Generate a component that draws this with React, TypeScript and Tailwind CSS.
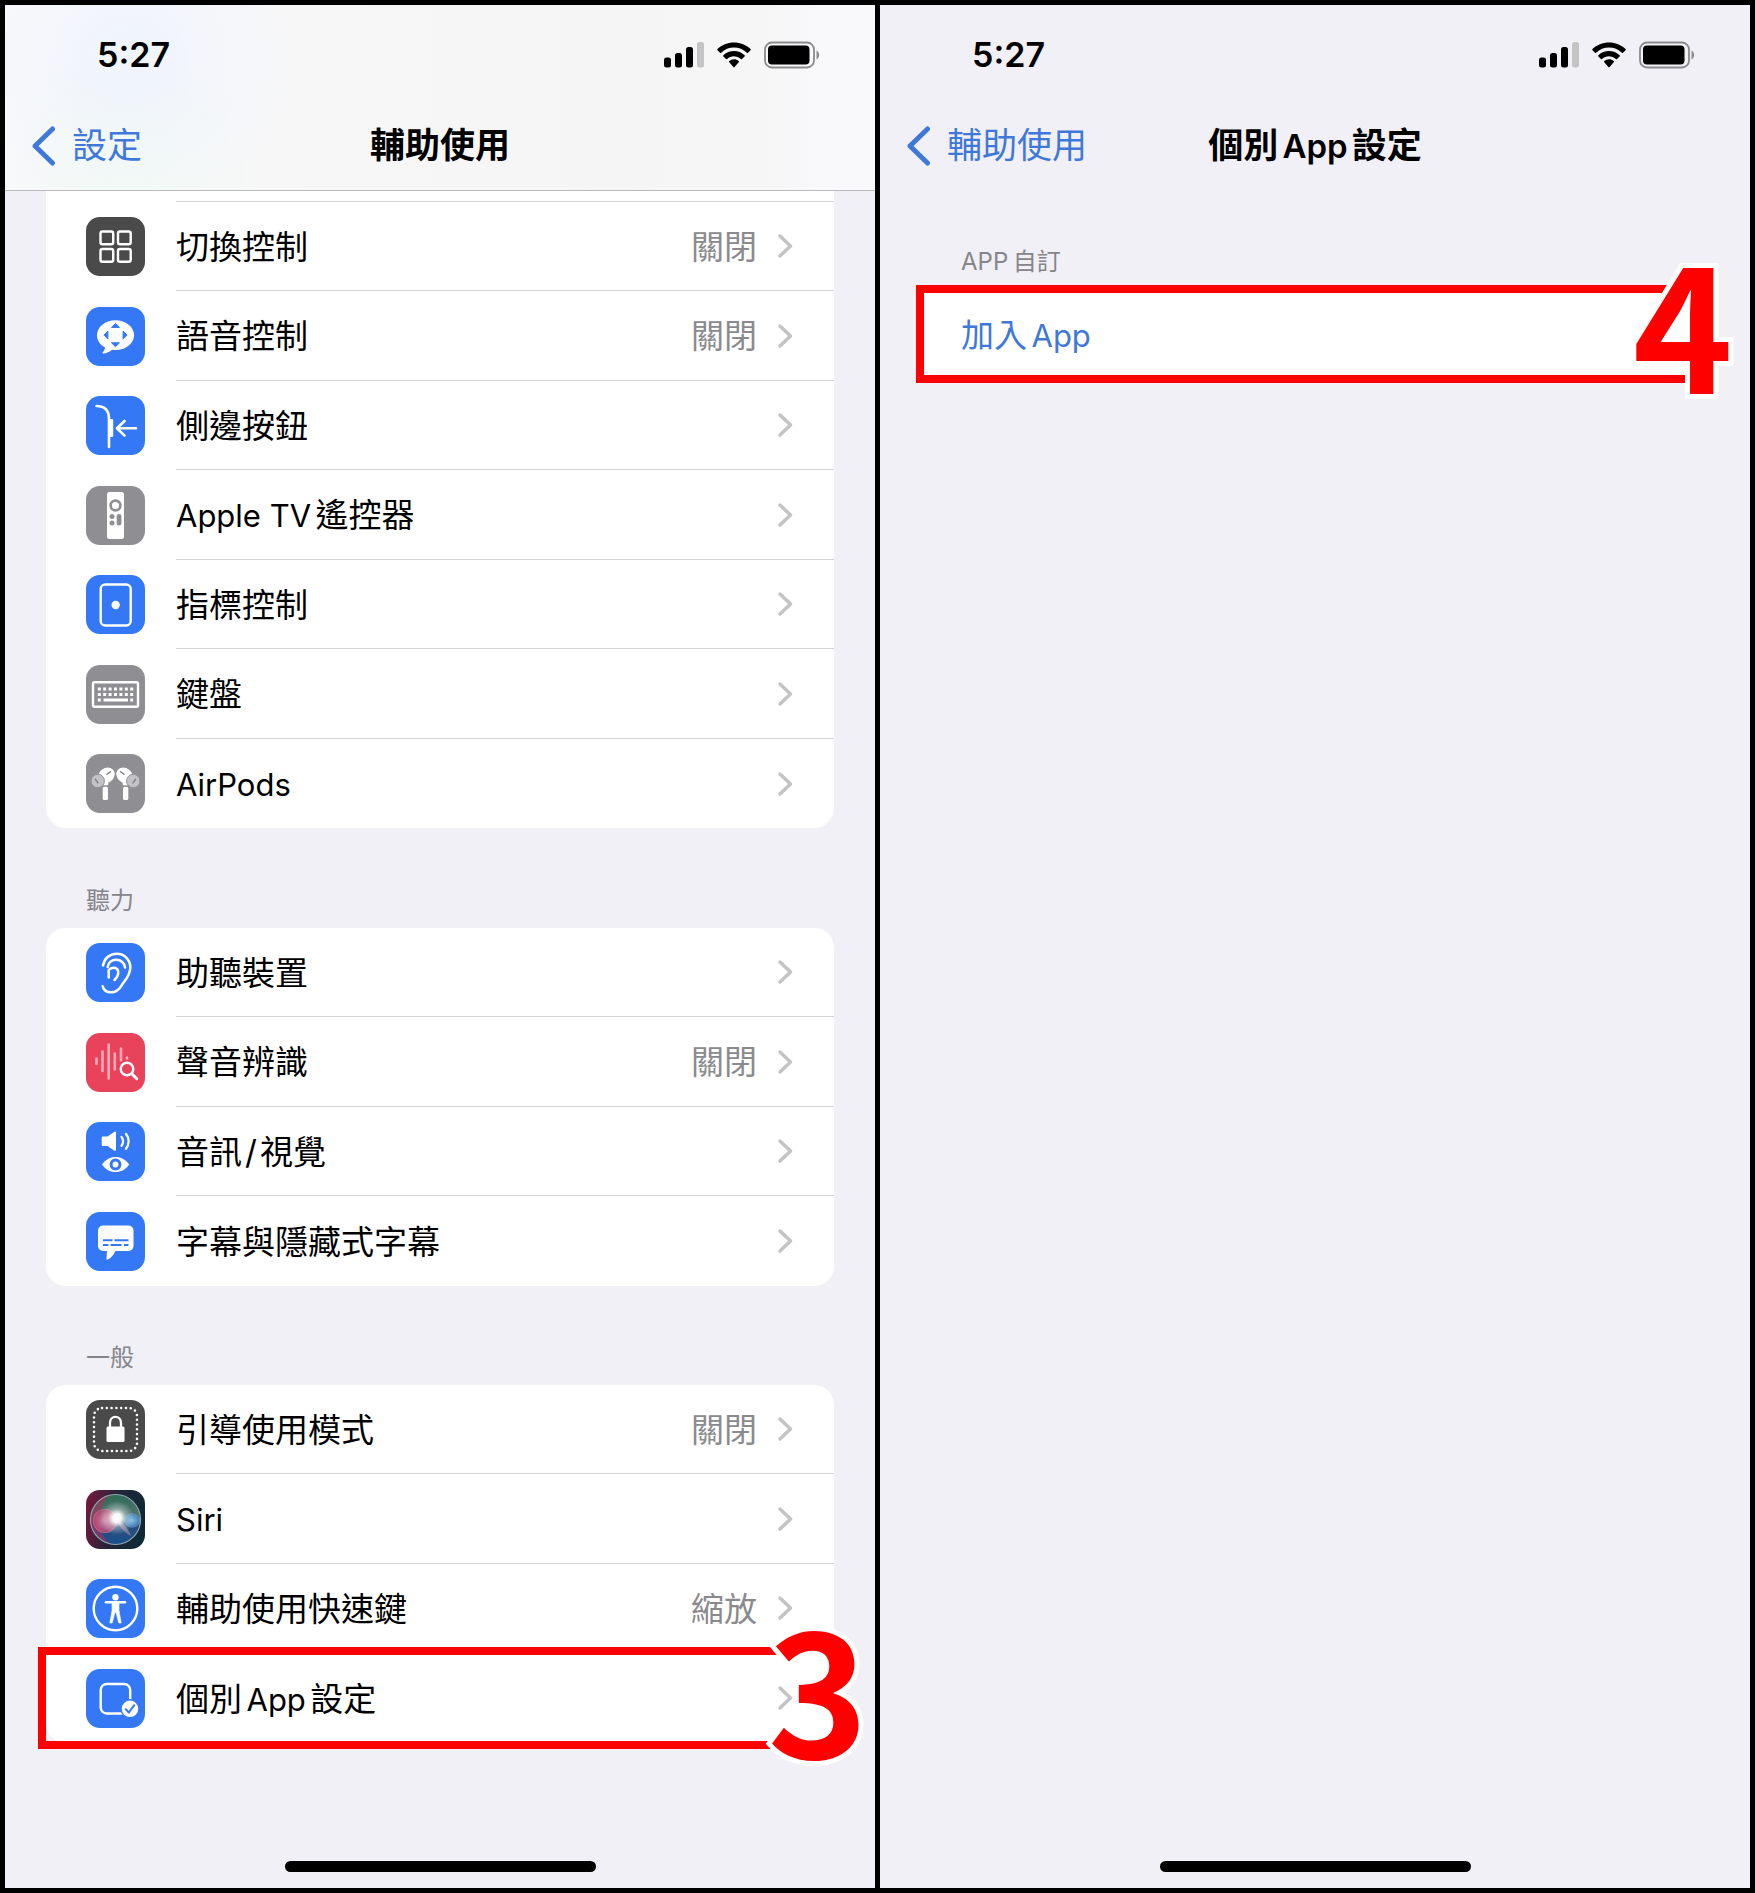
import type { ReactNode } from "react";

const BLUE = "#3478f6";
const GRAY = "#8e8e93";
const DARK = "#4a4a4a";

/* Sets the Latin runs of a Chinese string in a slightly smaller face, with thin spaces around them. */
function Mixed({ text, latin }: { text: string; latin: string }) {
  return (
    <span className="whitespace-pre">
      {text.split(/([\x20-\x7e]+)/).map((part, i) => {
        if (i % 2 === 0) return part;
        if (part === "/") return <span key={i} className="mx-[3px]">/</span>;
        return (
          <span key={i}>
            {part.startsWith(" ") && <span className="text-[16px]"> </span>}
            <span className={latin}>{part.trim()}</span>
            {part.endsWith(" ") && <span className="text-[16px]"> </span>}
          </span>
        );
      })}
    </span>
  );
}

function StatusBar() {
  return (
    <div className="flex h-[100px] items-center justify-between pl-[92px] pr-[55px]">
      <time className="text-[34px] leading-none font-semibold">5:27</time>
      <div className="flex items-center gap-[13px]">
        <svg width="40" height="26" viewBox="0 0 40 26" aria-label="訊號">
          <rect x="0" y="15.500" width="7" height="10" rx="2.500" />
          <rect x="11" y="11" width="7" height="14.500" rx="2.500" />
          <rect x="22" y="5" width="7" height="20.500" rx="2.500" />
          <rect x="33" y="0" width="7" height="25.500" rx="2.500" fill="#c4c4c6" />
        </svg>
        <svg width="34" height="26" viewBox="0 0 34 26" aria-label="Wi-Fi">
          <path d="M17 0.500C23.400 0.500 29.200 3 33.500 7a.8.8 0 0 1 0 1.200L31 10.700a.8.8 0 0 1-1.100 0A18.500 18.500 0 0 0 17 5.500 18.500 18.500 0 0 0 4.100 10.700a.8.8 0 0 1-1.100 0L.5 8.200A.8.8 0 0 1 .5 7C4.800 3 10.600.5 17 .5Z" />
          <path d="M17 9c4.100 0 7.800 1.600 10.600 4.200a.8.8 0 0 1 0 1.200L25 17a.8.8 0 0 1-1.100 0A10.300 10.300 0 0 0 17 14.200c-2.600 0-5 1-6.900 2.800a.8.8 0 0 1-1.100 0l-2.600-2.600a.8.8 0 0 1 0-1.200A15.500 15.500 0 0 1 17 9Z" />
          <path d="M17 17.300c1.800 0 3.400.6 4.700 1.700a.8.8 0 0 1 0 1.200l-4.100 4.900a.8.8 0 0 1-1.200 0l-4.100-4.900a.8.8 0 0 1 0-1.200A7.200 7.200 0 0 1 17 17.300Z" />
        </svg>
        <svg width="56" height="28" viewBox="0 0 56 28" aria-label="電池">
          <rect x="1" y="1.500" width="49" height="25" rx="7" fill="none" stroke="#8b8b8d" strokeWidth="1.800" />
          <rect x="4" y="4.500" width="41.500" height="19" rx="4" />
          <path d="M52.500 9.500c1.600.7 2.600 2.400 2.600 4.500s-1 3.800-2.600 4.500Z" fill="#8b8b8d" />
        </svg>
      </div>
    </div>
  );
}

function NavBar({ back, title }: { back: string; title: string }) {
  return (
    <div className="grid h-[85px] grid-cols-[1fr_auto_1fr] items-center pb-[4px] text-[35px] leading-none">
      <button type="button" className="flex items-center gap-[16px] pl-[26px] text-[#3f78d8]">
        <svg width="25" height="40" viewBox="0 0 25 40" fill="none" stroke="#3f78d8" strokeWidth="5" strokeLinecap="round" strokeLinejoin="round" aria-hidden="true">
          <path d="M21.500 3 4 20l17.500 17" />
        </svg>
        <span>{back}</span>
      </button>
      <h1 className="font-semibold">
        <Mixed text={title} latin="text-[33px]" />
      </h1>
    </div>
  );
}

function Tile({ color, children }: { color: string; children: ReactNode }) {
  return (
    <svg className="size-[59px] shrink-0" viewBox="0 0 59 59" fill="none" aria-hidden="true">
      <rect width="59" height="59" rx="14" fill={color} />
      {children}
    </svg>
  );
}

const switchIcon = (
  <Tile color={DARK}>
    <g stroke="#fff" strokeWidth="2.400">
      <rect x="14.500" y="14.500" width="12.700" height="12.700" rx="2" />
      <rect x="32" y="14.500" width="12.700" height="12.700" rx="2" />
      <rect x="14.500" y="32" width="12.700" height="12.700" rx="2" />
      <rect x="32" y="32" width="12.700" height="12.700" rx="2" />
    </g>
  </Tile>
);

const voiceIcon = (
  <Tile color={BLUE}>
    <path d="M29.500 13.200c10.300 0 18.600 6.700 18.600 15 0 8.200-8.300 14.800-18.600 14.800-1.200 0-2.300-.1-3.400-.3-2.500 2.200-5.600 3.500-8.900 3.800-.7 0-.9-.7-.5-1.200 1.400-1.300 2.200-2.900 2.400-4.700C14.200 37.900 11 33.400 11 28.200c0-8.300 8.200-15 18.500-15Z" fill="#fff" />
    <g fill={BLUE} stroke={BLUE} strokeLinejoin="round">
      <path d="m29.500 16.500 4 3.900h-8Z" />
      <path d="m29.500 39.700 4-3.900h-8Z" />
      <path d="m18 28.100 3.900-4v8Z" />
      <path d="m41 28.100-3.900-4v8Z" />
    </g>
  </Tile>
);

const sideIcon = (
  <Tile color={BLUE}>
    <g stroke="#fff" strokeLinecap="round" strokeLinejoin="round">
      <path d="M10.500 10c8 0 12.500 4.500 12.500 13v28" strokeWidth="2.600" />
      <path d="M50 32.300H32M38.500 25l-7.500 7.300 7.500 7.300" strokeWidth="2.600" />
    </g>
    <rect x="22.500" y="23" width="4.700" height="18" rx="1" fill="#fff" />
  </Tile>
);

const remoteIcon = (
  <Tile color={GRAY}>
    <rect x="21" y="6" width="17" height="47" rx="2.500" fill="#fff" />
    <circle cx="29.500" cy="19.500" r="4.900" stroke={GRAY} strokeWidth="2.600" />
    <g fill={GRAY}>
      <circle cx="26" cy="30.500" r="2.500" />
      <circle cx="26" cy="37" r="2.500" />
      <rect x="30.700" y="28" width="4.700" height="11.500" rx="2.300" />
    </g>
  </Tile>
);

const pointerIcon = (
  <Tile color={BLUE}>
    <rect x="14.700" y="9.500" width="30" height="41" rx="4.500" stroke="#fff" strokeWidth="2.400" />
    <circle cx="29.700" cy="30" r="4.200" fill="#fff" />
  </Tile>
);

const keyboardIcon = (
  <Tile color={GRAY}>
    <rect x="7" y="17.200" width="45" height="24.500" rx="1.500" stroke="#fff" strokeWidth="2.400" />
    <g stroke="#fff" strokeWidth="3">
      <path d="M11.800 24h36M11.800 29.500h36" strokeDasharray="3 2.400" />
      <path d="M11.800 35h3M17.500 35h24.500M44.200 35h3" />
    </g>
  </Tile>
);

const airpod = (
  <>
    <ellipse cx="20.300" cy="21.500" rx="9" ry="7.300" fill="#fff" transform="rotate(-38 20.300 21.500)" />
    <rect x="16.700" y="32.700" width="5.300" height="13.300" rx="1.500" fill="#fff" />
    <path d="M17 29h5.500l-.5 2.200h-5Z" fill="#fff" />
    <circle cx="11.700" cy="27" r="6.700" fill="#c3c3c7" stroke={GRAY} strokeWidth="1" />
    <path d="m21 20.300 3.500-2.500M9.500 25.300l2.500 3.700" stroke="#77777c" strokeWidth="1.300" strokeLinecap="round" />
  </>
);

const airpodsIcon = (
  <Tile color={GRAY}>
    {airpod}
    <g transform="matrix(-1 0 0 1 59 0)">{airpod}</g>
  </Tile>
);

const earIcon = (
  <Tile color={BLUE}>
    <g stroke="#fff" strokeWidth="2.500" strokeLinecap="round" strokeLinejoin="round">
      <path d="M17 22.500c1.300-7 6.500-11.700 13.700-11.700 8 0 13.600 6 13.600 13.700 0 8.500-5.300 12.300-8.600 17.800-2.500 4.200-5.500 7-10.700 7-4.300 0-7.300-2.300-8.300-6" />
      <path d="M21.700 24c.5-4.300 4-7.200 8.500-7.200 4.800 0 8.500 3.200 8.800 7.700" />
      <path d="M22.700 34.500V27c2.500-3 8-3.200 9.300.5.800 3.200-.8 6.800-3.500 9.500" />
    </g>
  </Tile>
);

const soundIcon = (
  <Tile color="#e8435a">
    <g stroke="#f6a9b4" strokeWidth="2.600" strokeLinecap="round">
      <path d="M10.500 25.500v5.500M16.500 18.500v19.500M22.700 11.500v34M28.800 20.500v16M35 15.500v12M41 24.500v1" />
    </g>
    <circle cx="41" cy="36" r="6.300" stroke="#fff" strokeWidth="2.400" />
    <path d="m45.800 40.800 5 5" stroke="#fff" strokeWidth="3" strokeLinecap="round" />
  </Tile>
);

const audioIcon = (
  <Tile color={BLUE}>
    <path d="M17 14.500h4.500l7-4.700c.8-.5 1.500-.2 1.500.6v17.800c0 .8-.7 1.100-1.500.6l-7-4.800H17c-.8 0-1.300-.5-1.300-1.300v-6.900c0-.8.500-1.300 1.300-1.300Z" fill="#fff" />
    <path d="M35.500 14.800c2 2.800 2 6.200 0 9M40 11.800c3.500 4.500 3.500 10.500 0 15" stroke="#fff" strokeWidth="2.200" strokeLinecap="round" />
    <path d="M16 42.500c3.500-5 8-7.500 13.500-7.500S39.700 37.500 43.200 42.500c-3.500 5-8 7.500-13.700 7.500S19.500 47.500 16 42.500Z" fill="#fff" />
    <circle cx="29.500" cy="42.500" r="4.400" stroke={BLUE} strokeWidth="3" fill="#fff" />
  </Tile>
);

const captionIcon = (
  <Tile color={BLUE}>
    <path d="M17 13.500h25.500a5 5 0 0 1 5 5V34a5 5 0 0 1-5 5H29.500c-2 4.500-5 7.500-8 8.500-1 .3-1.300-.2-1-1L21 39h-4a5 5 0 0 1-5-5V18.500a5 5 0 0 1 5-5Z" fill="#fff" />
    <path d="M17 28.200h9.500M28.500 28.200h14M17 33h5.500M24.500 33h11M38 33h4.500" stroke={BLUE} strokeWidth="2" />
  </Tile>
);

const guidedIcon = (
  <Tile color={DARK}>
    <rect x="8" y="8" width="43" height="43" rx="8" stroke="#fff" strokeWidth="2.600" strokeLinecap="round" strokeDasharray="0 4.800" />
    <rect x="20.500" y="26.500" width="18" height="15.500" rx="1.500" fill="#fff" />
    <path d="M24 27v-4c0-3.500 2.300-6.200 5.500-6.200S35 19.500 35 23v4" stroke="#fff" strokeWidth="2.300" />
  </Tile>
);

const siriIcon = (
  <svg className="size-[59px] shrink-0" viewBox="0 0 59 59" aria-hidden="true">
    <defs>
      <linearGradient id="siriBase" x1="0" y1="0.300" x2="1" y2="0.500">
        <stop offset="0" stopColor="#74183c" />
        <stop offset="0.450" stopColor="#25243a" />
        <stop offset="1" stopColor="#0c2a35" />
      </linearGradient>
      <linearGradient id="siriOrb" x1="0" y1="0" x2="0" y2="1">
        <stop offset="0" stopColor="#2d6b55" />
        <stop offset="0.400" stopColor="#50756f" />
        <stop offset="0.620" stopColor="#2d4d78" />
        <stop offset="1" stopColor="#17508e" />
      </linearGradient>
      <radialGradient id="siriPink">
        <stop offset="0" stopColor="#e58aac" />
        <stop offset="0.900" stopColor="#c24a78" stopOpacity="0.900" />
        <stop offset="1" stopColor="#e07aa0" />
      </radialGradient>
      <radialGradient id="siriCyan">
        <stop offset="0" stopColor="#8fd0f5" />
        <stop offset="0.900" stopColor="#4a8ecb" stopOpacity="0.900" />
        <stop offset="1" stopColor="#6fb4e0" />
      </radialGradient>
      <radialGradient id="siriGlow">
        <stop offset="0" stopColor="#fff" />
        <stop offset="0.250" stopColor="#fff" stopOpacity="0.950" />
        <stop offset="0.550" stopColor="#fff" stopOpacity="0.350" />
        <stop offset="1" stopColor="#fff" stopOpacity="0" />
      </radialGradient>
    </defs>
    <rect width="59" height="59" rx="14" fill="url(#siriBase)" />
    <circle cx="29.500" cy="29.500" r="25" fill="url(#siriOrb)" />
    <path d="M6 21C8 12 16 5 26 4.700 18 9 14 18 14 30S18 50 26 54.200C14 53 4.500 43 4.500 30Z" fill="#a52e58" opacity="0.600" />
    <circle cx="19" cy="31" r="12" fill="url(#siriPink)" opacity="0.850" />
    <ellipse cx="46" cy="30.500" rx="8" ry="7" fill="url(#siriCyan)" opacity="0.850" />
    <path d="M30 29c7 3 12 9 15 17-6-3-12-9-15-17Z" fill="#e3b9d3" opacity="0.400" />
    <circle cx="31" cy="28" r="17" fill="url(#siriGlow)" />
    <circle cx="29.500" cy="29.500" r="25" fill="none" stroke="#8fa5aa" strokeWidth="1.200" />
  </svg>
);

const accessIcon = (
  <Tile color={BLUE}>
    <circle cx="29.500" cy="29.500" r="21.800" stroke="#fff" strokeWidth="2.400" />
    <circle cx="29.500" cy="18.300" r="3.200" fill="#fff" />
    <path d="M20 23.300h19" stroke="#fff" strokeWidth="2.600" strokeLinecap="round" />
    <path d="M26 23h7v8.500l2.200 12.500h-2.400l-2.700-10.500h-1.200L26.200 44h-2.400L26 31.500Z" fill="#fff" stroke="#fff" strokeWidth="0.600" strokeLinejoin="round" />
  </Tile>
);

const perAppIcon = (
  <Tile color={BLUE}>
    <rect x="14.700" y="15" width="29.500" height="29.500" rx="6" stroke="#fff" strokeWidth="2.400" />
    <circle cx="44" cy="39.800" r="9" fill="#fff" stroke={BLUE} strokeWidth="1.500" />
    <path d="m39.800 40.200 3.100 3.300 5.300-7.300" stroke={BLUE} strokeWidth="2" strokeLinecap="round" strokeLinejoin="round" />
  </Tile>
);

type Item = { icon: ReactNode; label: string; value?: string; step?: string };

const physical: Item[] = [
  { icon: switchIcon, label: "切換控制", value: "關閉" },
  { icon: voiceIcon, label: "語音控制", value: "關閉" },
  { icon: sideIcon, label: "側邊按鈕" },
  { icon: remoteIcon, label: "Apple TV 遙控器" },
  { icon: pointerIcon, label: "指標控制" },
  { icon: keyboardIcon, label: "鍵盤" },
  { icon: airpodsIcon, label: "AirPods" },
];

const hearing: Item[] = [
  { icon: earIcon, label: "助聽裝置" },
  { icon: soundIcon, label: "聲音辨識", value: "關閉" },
  { icon: audioIcon, label: "音訊/視覺" },
  { icon: captionIcon, label: "字幕與隱藏式字幕" },
];

const general: Item[] = [
  { icon: guidedIcon, label: "引導使用模式", value: "關閉" },
  { icon: siriIcon, label: "Siri" },
  { icon: accessIcon, label: "輔助使用快速鍵", value: "縮放" },
  { icon: perAppIcon, label: "個別 App 設定", step: "3" },
];

function StepNumber({ children }: { children: ReactNode }) {
  return (
    <span className="font-['Noto_Sans_CJK_TC',sans-serif] text-[170px] leading-[170px] font-bold text-[#ff0000] [-webkit-text-stroke:10px_white] [paint-order:stroke]">
      {children}
    </span>
  );
}

function Row({ item }: { item: Item }) {
  return (
    <li className="group relative odd:h-[89px] even:h-[90px]">
      <button type="button" className="flex size-full items-center pl-[40px] text-left">
        {item.icon}
        <span className="ml-[31px] flex h-full flex-1 items-center border-b border-[#d4d4d7] pr-[41px] group-last:border-b-0">
          <span className="flex-1 pt-[2px]">
            <Mixed text={item.label} latin="text-[31px]" />
          </span>
          {item.value && <span className="mr-[20px] pt-[2px] text-[#8a8a8e]">{item.value}</span>}
          <svg width="16" height="26" viewBox="0 0 16 26" fill="none" stroke="#c4c4c7" strokeWidth="3.500" strokeLinecap="round" strokeLinejoin="round" aria-hidden="true">
            <path d="m3 3 10.500 10L3 23" />
          </svg>
        </span>
      </button>
      {item.step && (
        <>
          <span className="pointer-events-none absolute -top-[6px] right-[32px] -bottom-[6px] -left-[8px] border-8 border-r-0 border-[#ff0000]" />
          <span className="pointer-events-none absolute -top-[53px] -right-[34px]">
            <StepNumber>{item.step}</StepNumber>
          </span>
        </>
      )}
    </li>
  );
}

function Card({ items, className }: { items: Item[]; className: string }) {
  return (
    <ul className={`mx-[41px] bg-white text-[33px] leading-none ${className}`}>
      {items.map((item) => (
        <Row key={item.label} item={item} />
      ))}
    </ul>
  );
}

function GroupTitle({ children, className }: { children: string; className: string }) {
  return (
    <h2 className={`flex items-end px-[81px] text-[24px] leading-[26px] text-[#85858a] ${className}`}>
      <Mixed text={children} latin="text-[24px]" />
    </h2>
  );
}

function HomeBar() {
  return <div className="mx-auto mt-auto mb-[16px] h-[11px] w-[311px] rounded-full bg-black" />;
}

export default function App() {
  return (
    <div className="grid min-h-screen grid-cols-2 gap-[5px] bg-black p-[5px] font-[Inter,'Noto_Sans_CJK_TC',sans-serif] text-black" lang="zh-Hant">
      <section className="flex min-w-0 flex-col bg-[#f1f0f6]">
        <header className="border-b border-[#bcbcbe] bg-[radial-gradient(circle_at_14%_30%,#eff4fc_0%,transparent_22%),radial-gradient(circle_at_14%_95%,#f2faf3_0%,transparent_18%),linear-gradient(90deg,#f9f9fb_0%,#f7f7f8_30%,#f5f5f5_70%,#f6f6f7_88%,#f9f9fc_94%)]">
          <StatusBar />
          <NavBar back="設定" title="輔助使用" />
        </header>
        <div className="mx-[41px] h-[11px] bg-white pl-[130px]">
          <div className="h-full border-b border-[#d4d4d7]" />
        </div>
        <Card items={physical} className="rounded-b-[20px]" />
        <GroupTitle className="h-[100px] pb-[14px]">聽力</GroupTitle>
        <Card items={hearing} className="rounded-[20px]" />
        <GroupTitle className="h-[99px] pb-[14px]">一般</GroupTitle>
        <Card items={general} className="rounded-[20px]" />
        <HomeBar />
      </section>
      <section className="flex min-w-0 flex-col bg-[#f1f0f6]">
        <header>
          <StatusBar />
          <NavBar back="輔助使用" title="個別 App 設定" />
        </header>
        <GroupTitle className="h-[95px] pb-[8px]">APP 自訂</GroupTitle>
        <div className="relative mr-[44px] ml-[36px]">
          <button type="button" className="flex h-[98px] w-full items-center border-8 border-[#ff0000] bg-white pt-[2px] pl-[37px] text-[33px] leading-none text-[#3f78d8]">
            <Mixed text="加入 App" latin="text-[31px]" />
          </button>
          <span className="pointer-events-none absolute -top-[50px] -right-[27px]">
            <StepNumber>4</StepNumber>
          </span>
        </div>
        <HomeBar />
      </section>
    </div>
  );
}
